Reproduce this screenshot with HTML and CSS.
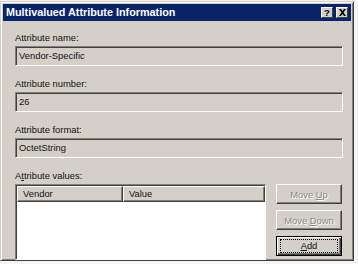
FILE: index.html
```html
<!DOCTYPE html>
<html lang="en">
<head>
    <meta charset="UTF-8">
    <title>Multivalued Attribute Information</title>
    <link rel="stylesheet" href="styles.css">
</head>
<body>
    <div class="window">
        <div class="titlebar">
            <span class="title">Multivalued Attribute Information</span>
            <div class="title-buttons">
                <span class="cap-btn help">?</span>
                <span class="cap-btn close">
                    <svg width="7" height="7" viewBox="0 0 7 7">
                        <path d="M0 0h2l1.5 2 1.5-2h2l-2.5 3.5 2.5 3.5h-2l-1.5-2-1.5 2h-2l2.5-3.5z" fill="#000"/>
                    </svg>
                </span>
            </div>
        </div>

        <div class="content">
            <div class="group">
                <div class="label">Attribute name:</div>
                <div class="field">Vendor-Specific</div>
            </div>
            <div class="group">
                <div class="label">Attribute number:</div>
                <div class="field">26</div>
            </div>
            <div class="group">
                <div class="label">Attribute format:</div>
                <div class="field">OctetString</div>
            </div>
            <div class="group">
                <div class="label">A<u>t</u>tribute values:</div>
                <div class="values-row">
                    <div class="list">
                        <div class="list-header">
                            <div class="col col-vendor">Vendor</div>
                            <div class="col col-value">Value</div>
                        </div>
                    </div>
                    <div class="buttons">
                        <button class="btn" disabled>Move <u>U</u>p</button>
                        <button class="btn" disabled>Move <u>D</u>own</button>
                        <button class="btn btn-default"><span class="focus"><u>A</u>dd</span></button>
                    </div>
                </div>
            </div>
        </div>
    </div>
</body>
</html>
```

FILE: styles.css
```css
* {
    margin: 0;
    padding: 0;
    box-sizing: border-box;
}

body {
    background: #f4f4f4;
    font-family: 'Liberation Sans', Arial, sans-serif;
    font-size: 9.4px;
    color: #111;
    width: 358px;
    height: 264px;
    overflow: hidden;
}

.window {
    width: 354px;
    height: 260px;
    margin-top: 1px;
    background: #d4d0c8;
    border: 1px solid;
    border-color: #d4d0c8 #404040 #404040 #d4d0c8;
    box-shadow: inset 1px 1px #fff, inset -1px -1px #808080;
    padding: 2px;
    display: flex;
    flex-direction: column;
    overflow: hidden;
}

.titlebar {
    height: 17px;
    background: #0a246a;
    display: flex;
    align-items: center;
    justify-content: space-between;
    padding: 0 3px 0 3px;
    flex-shrink: 0;
}

.title {
    color: #fff;
    font-weight: bold;
    font-size: 10.8px;
    line-height: 17px;
}

.title-buttons {
    display: flex;
    gap: 3px;
}

.cap-btn {
    width: 12px;
    height: 11px;
    background: #d4d0c8;
    border: 1px solid;
    border-color: #fff #404040 #404040 #fff;
    display: flex;
    align-items: center;
    justify-content: center;
    font-weight: bold;
    font-size: 9.5px;
    line-height: 9px;
    color: #000;
}

.content {
    flex: 1;
    padding: 11px 8px 0 12px;
    display: flex;
    flex-direction: column;
    gap: 12px;
}

.label {
    line-height: 12px;
    height: 12px;
    margin-bottom: 2px;
}

.field {
    height: 20px;
    line-height: 16px;
    border: 1px solid;
    border-color: #808080 #fff #fff #808080;
    box-shadow: inset 1px 1px #404040, inset -1px -1px #d4d0c8;
    padding: 1px 3px;
}

.values-row {
    display: flex;
    gap: 10px;
}

.list {
    width: 251px;
    height: 76px;
    background: #fff;
    border: 1px solid;
    border-color: #808080 #fff #fff #808080;
    box-shadow: inset 1px 1px #404040;
    padding: 1px 0 0 1px;
}

.list-header {
    display: flex;
    height: 16px;
}

.col {
    background: #d4d0c8;
    line-height: 14px;
    padding-left: 5px;
    border: 1px solid;
    border-color: #fff #404040 #404040 #fff;
    box-shadow: inset -1px -1px #808080;
}

.col-vendor {
    width: 106px;
}

.col-value {
    flex: 1;
}

.buttons {
    display: flex;
    flex-direction: column;
    gap: 6px;
}

.btn {
    width: 66px;
    height: 20px;
    background: #d4d0c8;
    font-family: 'Liberation Sans', Arial, sans-serif;
    font-size: 9.4px;
    color: #111;
    border: 1px solid;
    border-color: #fff #404040 #404040 #fff;
    box-shadow: inset -1px -1px #808080;
}

.btn:disabled {
    color: #8a8a8a;
    text-shadow: 1px 1px #fff;
}

.btn-default {
    border: 1px solid #000;
    box-shadow: inset 1px 1px #fff, inset -1px -1px #404040, inset -2px -2px #808080;
    padding: 2px 3px;
}

.focus {
    display: block;
    height: 100%;
    line-height: 12px;
    border: 1px dotted #000;
}
```
